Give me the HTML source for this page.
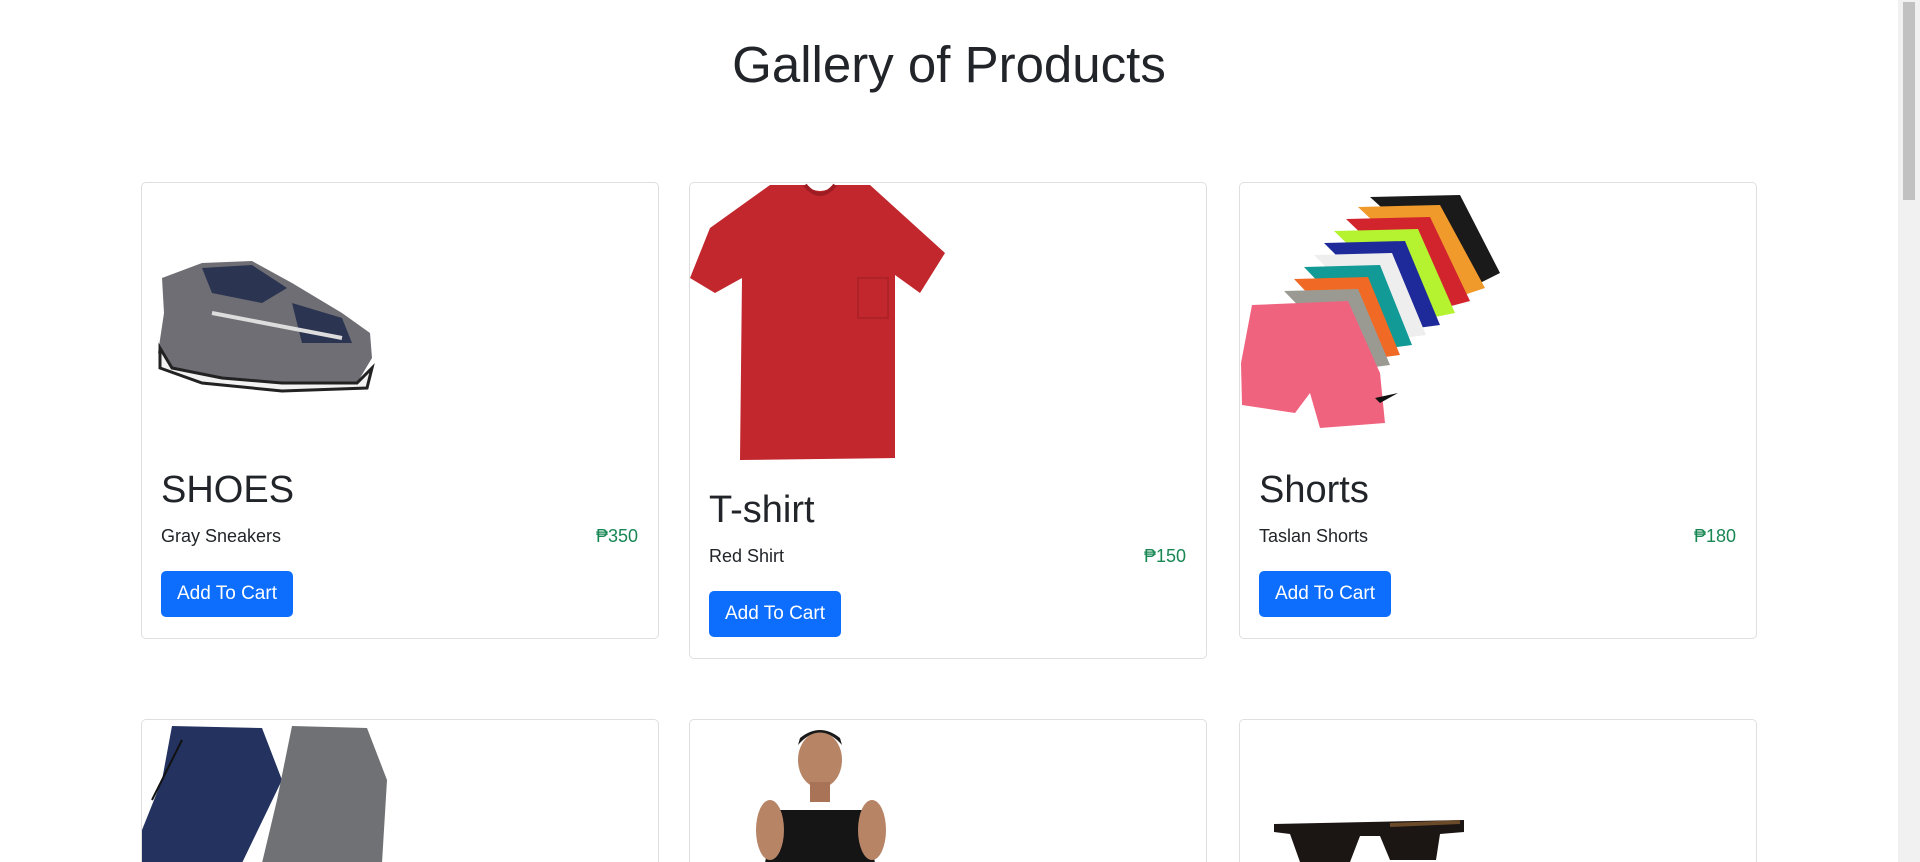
<!DOCTYPE html>
<html><head><meta charset="utf-8"><style>
*{box-sizing:border-box;margin:0;padding:0}
html,body{width:1920px;height:862px;overflow:hidden;background:#fff;font-family:"Liberation Sans",sans-serif;color:#212529;position:relative}
.sb{position:absolute;right:0;top:0;width:22px;height:862px;background:#f1f1f1}
.sb div{position:absolute;left:5px;right:5px;top:2px;height:198px;background:#c1c1c1}
h1{position:absolute;left:0;width:1898px;top:36px;text-align:center;font-size:51px;font-weight:500;line-height:58px}
.card{position:absolute;width:518px;border:1px solid #dfdfdf;border-radius:5px;background:#fff;overflow:hidden}
.card.b{height:143px;border-bottom:none;border-radius:5px 5px 0 0}
.card svg{display:block}
.body{padding:16px 20px 21px 19px}
.body h2{font-size:38px;font-weight:500;line-height:46px;margin-bottom:8px}
.row{display:flex;justify-content:space-between;font-size:18px;line-height:24px;margin-bottom:26px;position:relative;top:3px}
.price{color:#198754}
.btn{display:inline-block;background:#0d6efd;color:#fff;font-size:19px;line-height:24px;padding:11px 16px;border-radius:5px}
</style></head><body>
<div class="sb"><div></div></div>
<h1>Gallery of Products</h1>

<div class="card" style="left:141px;top:182px">
<svg width="518" height="268"><g>
<path d="M20 95 L60 80 L110 78 L150 100 L200 130 L228 150 L230 175 L215 200 L140 200 L80 195 L30 185 L16 170 L22 130Z" fill="#6e6e74"/>
<path d="M18 165 L30 185 L80 195 L140 200 L215 200 L230 185 L225 205 L140 208 L60 200 L18 185Z" fill="#f2f2f2" stroke="#222" stroke-width="3"/>
<path d="M60 85 L110 82 L145 105 L120 120 L70 110Z" fill="#2b3450"/>
<path d="M150 120 L200 135 L210 160 L160 160Z" fill="#2b3450"/>
<path d="M70 130 L200 155" stroke="#ddd" stroke-width="4"/>
</g></svg>
<div class="body"><h2>SHOES</h2><div class="row"><span>Gray Sneakers</span><span class="price">₱350</span></div><span class="btn">Add To Cart</span></div>
</div>

<div class="card" style="left:689px;top:182px">
<svg width="518" height="288">
<path d="M80 2 L115 2 Q130 14 145 2 L180 2 L255 70 L230 110 L205 92 L205 275 L50 277 L52 95 L25 110 L0 95 L20 45Z" fill="#c1272d"/>
<path d="M115 2 Q130 20 145 2" fill="none" stroke="#9e1c22" stroke-width="4"/>
<rect x="168" y="95" width="30" height="40" fill="none" stroke="#a82027" stroke-width="1.5"/>
</svg>
<div class="body"><h2>T-shirt</h2><div class="row"><span>Red Shirt</span><span class="price">₱150</span></div><span class="btn">Add To Cart</span></div>
</div>

<div class="card" style="left:1239px;top:182px">
<svg width="518" height="268">
<path d="M130 14 L220 12 L260 90 L230 105Z" fill="#1a1a1a"/>
<path d="M118 24 L200 22 L245 105 L215 115Z" fill="#f19a2c"/>
<path d="M106 36 L190 34 L230 118 L200 126Z" fill="#d2242c"/>
<path d="M94 48 L178 46 L215 130 L185 136Z" fill="#b5f22f"/>
<path d="M84 60 L165 58 L200 142 L170 146Z" fill="#1f2a9a"/>
<path d="M74 72 L152 70 L186 152 L156 156Z" fill="#eeeeee"/>
<path d="M64 84 L140 82 L172 162 L142 166Z" fill="#119a96"/>
<path d="M54 96 L128 94 L160 172 L130 176Z" fill="#f06a25"/>
<path d="M44 108 L118 106 L150 182 L120 186Z" fill="#9a9a92"/>
<path d="M12 122 L108 118 L140 190 L145 240 L80 245 L70 210 L55 230 L2 222 L1 180Z" fill="#f0637f"/>
<path d="M135 215 L158 210 L140 220Z" fill="#111"/>
</svg>
<div class="body"><h2>Shorts</h2><div class="row"><span>Taslan Shorts</span><span class="price">₱180</span></div><span class="btn">Add To Cart</span></div>
</div>

<div class="card b" style="left:141px;top:719px">
<svg width="518" height="143">
<path d="M30 6 L120 8 L140 60 L100 143 L0 143 L0 110 L20 60Z" fill="#23325e"/>
<path d="M150 6 L225 8 L245 60 L240 143 L120 143 L135 80Z" fill="#6f7174"/>
<path d="M40 20 Q20 60 10 80" stroke="#111" stroke-width="2" fill="none"/>
</svg>
</div>

<div class="card b" style="left:689px;top:719px">
<svg width="518" height="143">
<ellipse cx="130" cy="40" rx="22" ry="28" fill="#b78466"/>
<path d="M108 25 Q130 0 152 25 L150 18 Q130 2 110 18Z" fill="#1a1a1a"/>
<rect x="120" y="62" width="20" height="20" fill="#a87356"/>
<path d="M85 90 L175 90 L185 143 L75 143Z" fill="#151515"/>
<ellipse cx="80" cy="110" rx="14" ry="30" fill="#b78466"/>
<ellipse cx="182" cy="110" rx="14" ry="30" fill="#b78466"/>
</svg>
</div>

<div class="card b" style="left:1239px;top:719px">
<svg width="518" height="143">
<path d="M34 104 L224 100 L224 112 L200 114 L196 140 L150 140 L140 116 L120 116 L110 142 L60 142 L50 114 L34 112Z" fill="#1b1513"/>
<path d="M150 105 L220 102" stroke="#6b4a2a" stroke-width="4"/>
</svg>
</div>
</body></html>
